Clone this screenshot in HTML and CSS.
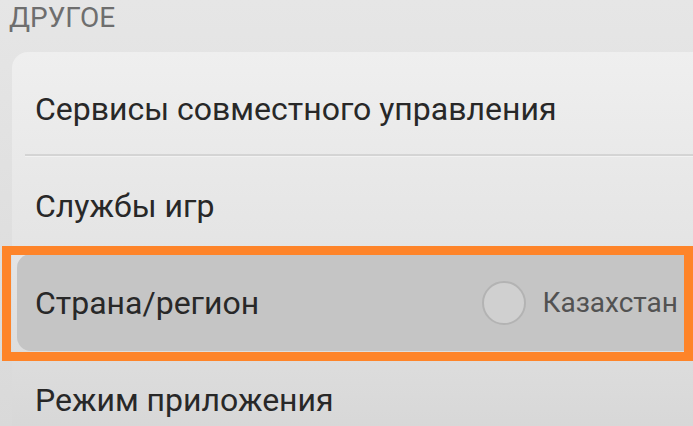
FILE: index.html
```html
<!DOCTYPE html>
<html lang="ru">
  <head>
    <meta charset="UTF-8" />
    <meta name="viewport" content="width=device-width, initial-scale=1.0" />
    <title>Другое</title>
    <link rel="stylesheet" href="styles.css">
  </head>
  <body>
    <div class="screen">
      <div class="section-title">ДРУГОЕ</div>

      <div class="card">
        <div class="row with-line">
          <span class="label">Сервисы совместного управления</span>
        </div>
        <div class="row">
          <span class="label">Службы игр</span>
        </div>
        <div class="row pressed">
          <span class="label">Страна/регион</span>
          <span class="value">
            <span class="radio"></span>
            Казахстан
          </span>
        </div>
        <div class="row">
          <span class="label">Режим приложения</span>
        </div>
      </div>
    </div>
  </body>
</html>
```

FILE: styles.css
```css
/* общий фон */
body {
  margin: 0;
  font-family: 'Roboto', 'Liberation Sans', sans-serif;
  background: #e3e3e3;
}

.screen {
  width: 693px;
  height: 426px;
  overflow: hidden;
  background: linear-gradient(#e6e6e6, #d9d9d9);
}

/* заголовок секции */
.section-title {
  height: 52px;
  box-sizing: border-box;
  padding: 1px 0 0 9px;
  font-size: 28px;
  line-height: 34px;
  color: #6e6e6e;
}

/* карточка со строками */
.card {
  margin-left: 12px;
  padding-top: 8px;
  border-radius: 16px 0 0 16px;
  background: linear-gradient(#efefef, #e2e2e2 60%, #d6d6d6);
}

.row {
  height: 97px;
  box-sizing: border-box;
  display: flex;
  align-items: center;
  justify-content: space-between;
  padding: 0 15px 0 23px;
  position: relative;
}

.with-line::after {
  content: '';
  position: absolute;
  left: 13px;
  right: 0;
  bottom: 0;
  height: 2px;
  background: #d4d4d4;
  border-bottom: 1px solid #f2f2f2;
}

.label {
  font-size: 32px;
  color: #282828;
}

/* нажатая строка */
.pressed {
  background: #c5c5c5;
  margin-left: 5px;
  padding-left: 18px;
  border-radius: 14px 0 0 14px;
}

.pressed::after {
  content: '';
  position: absolute;
  top: -8px;
  left: -15px;
  right: 0;
  bottom: -10px;
  border: 9px solid #fe8429;
}

.value {
  display: flex;
  align-items: center;
  gap: 16px;
  font-size: 28px;
  color: #525252;
}

.radio {
  width: 44px;
  height: 44px;
  box-sizing: border-box;
  border-radius: 50%;
  border: 2px solid #b3b3b3;
  background: #d0d0d0;
}
```
